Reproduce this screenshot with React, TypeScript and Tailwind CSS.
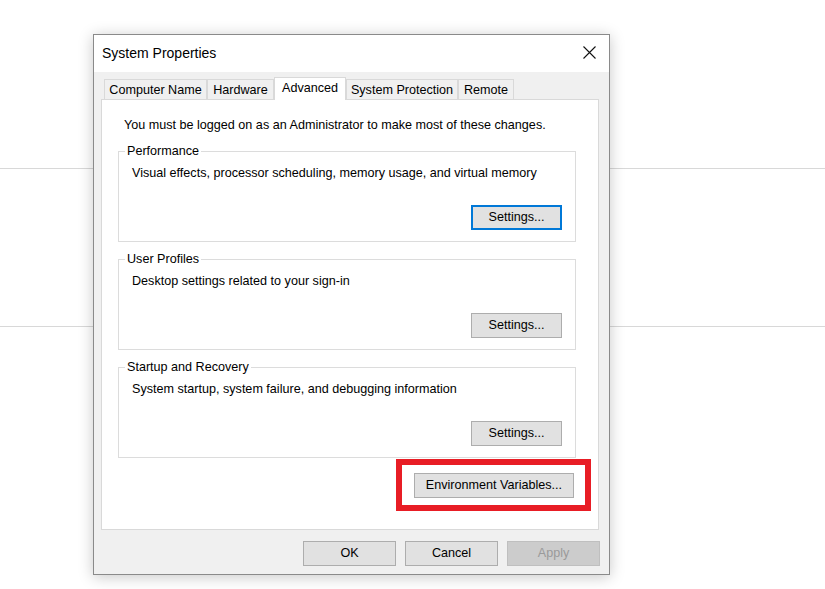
import React from "react";

const tabs = [
  { label: "Computer Name", w: "w-[103px]" },
  { label: "Hardware", w: "w-[67px]" },
  { label: "Advanced", w: "w-[72px]", active: true },
  { label: "System Protection", w: "w-[112px]" },
  { label: "Remote", w: "w-[56px]" },
];

const groups = [
  {
    title: "Performance",
    text: "Visual effects, processor scheduling, memory usage, and virtual memory",
    focused: true,
  },
  { title: "User Profiles", text: "Desktop settings related to your sign-in" },
  {
    title: "Startup and Recovery",
    text: "System startup, system failure, and debugging information",
  },
];

const Group = ({ title, text, focused }: { title: string; text: string; focused?: boolean }) => (
  <div className="relative ml-[16px] mr-[22px] h-[91px] border border-[#dcdcdc] flex flex-col pt-[13px] pl-[13px] pr-[13px] pb-[11px]">
    <span className="absolute left-[6px] -top-[9px] bg-white px-[2px] leading-[16px]">{title}</span>
    <p className="leading-[16px]">{text}</p>
    <button
      className={
        "mt-auto self-end w-[91px] h-[25px] bg-[#e1e1e1] " +
        (focused ? "border-2 border-[#0078d7]" : "border border-[#adadad]")
      }
    >
      Settings...
    </button>
  </div>
);

export default function App() {
  return (
    <div
      className="relative w-[825px] h-[589px] bg-white overflow-hidden text-[12.6px] text-black"
      style={{ fontFamily: '"Liberation Sans", Arial, sans-serif' }}
    >
      {/* background page lines */}
      <div className="pt-[168px]">
        <div className="h-px bg-[#d8d8d8]" />
        <div className="h-[157px]" />
        <div className="h-px bg-[#d8d8d8]" />
      </div>

      {/* dialog window */}
      <div className="absolute left-[93px] top-[34px] w-[517px] h-[541px] border border-[#8a8a8a] bg-[#f0f0f0] flex flex-col shadow-[0_2px_14px_rgba(0,0,0,0.22)]">
        <div className="h-[37px] bg-white flex items-center justify-between pl-[8px] pr-[13px]">
          <span className="text-[14px]">System Properties</span>
          <svg width="13" height="13" viewBox="0 0 13 13" className="mt-[-2px]">
            <path d="M0.5 0.5 L12.5 12.5 M12.5 0.5 L0.5 12.5" stroke="#111" strokeWidth="1.1" />
          </svg>
        </div>

        <div className="flex-1 flex flex-col pt-[5px]">
          <div className="flex items-end pl-[10px]">
            {tabs.map((t) =>
              t.active ? (
                <div
                  key={t.label}
                  className={`relative z-10 -mb-px h-[23px] ${t.w} bg-white border border-b-0 border-[#d9d9d9] flex items-center justify-center pb-[1px]`}
                >
                  {t.label}
                </div>
              ) : (
                <div
                  key={t.label}
                  className={`h-[20px] ${t.w} bg-[#f0f0f0] border border-b-0 border-[#d9d9d9] flex items-center justify-center pt-[2px]`}
                >
                  {t.label}
                </div>
              )
            )}
          </div>

          <div className="ml-[7px] mr-[10px] h-[431px] bg-white border border-[#d9d9d9] flex flex-col">
            <p className="pt-[17px] pl-[22px] leading-[16px]">
              You must be logged on as an Administrator to make most of these changes.
            </p>
            <div className="mt-[18px] flex flex-col gap-[17px]">
              {groups.map((g) => (
                <Group key={g.title} {...g} />
              ))}
            </div>
            <div className="mt-[1px] self-end mr-[7px] w-[195px] h-[52px] border-[6px] border-[#e81d25] pt-[8px] pl-[12px]">
              <button className="w-[160px] h-[25px] bg-[#e1e1e1] border border-[#adadad]">
                Environment Variables...
              </button>
            </div>
          </div>

          <div className="mt-[11px] flex justify-end gap-[9px] pr-[9px]">
            <button className="w-[93px] h-[25px] bg-[#e1e1e1] border border-[#adadad]">OK</button>
            <button className="w-[93px] h-[25px] bg-[#e1e1e1] border border-[#adadad]">Cancel</button>
            <button className="w-[93px] h-[25px] bg-[#cccccc] border border-[#bfbfbf] text-[#9a9a9a]">
              Apply
            </button>
          </div>
        </div>
      </div>
    </div>
  );
}
